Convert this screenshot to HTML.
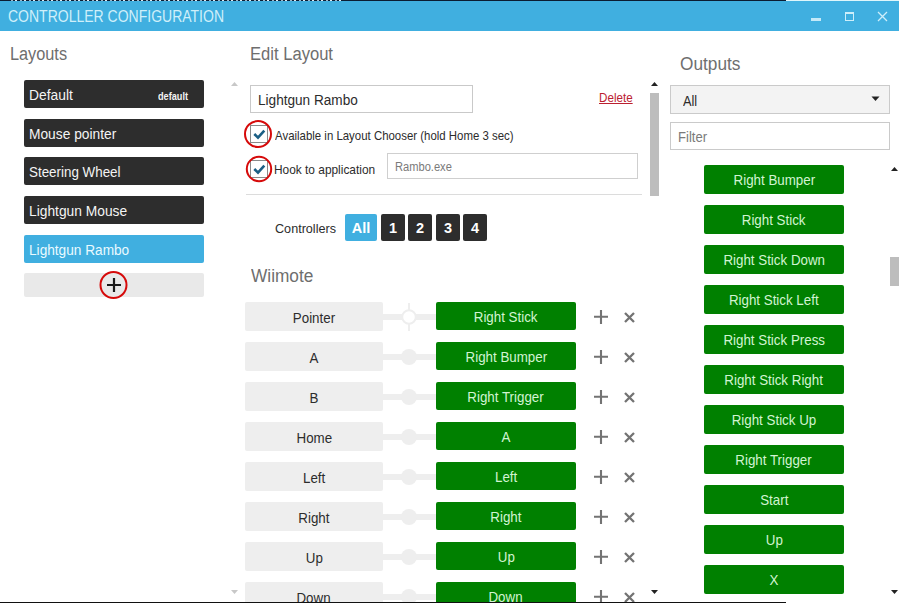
<!DOCTYPE html>
<html><head><meta charset="utf-8">
<style>
*{margin:0;padding:0;box-sizing:border-box}
html,body{width:899px;height:603px;overflow:hidden;background:#fff;font-family:"Liberation Sans",sans-serif;position:relative}
.a{position:absolute}
.t{position:absolute;white-space:nowrap;line-height:1;transform-origin:0 0}
.sc{display:inline-block;transform:scaleX(0.92);white-space:nowrap}
.gb{position:absolute;left:245px;width:138px;height:29px;background:#eeeeee;border-radius:2px;color:#2c2c2c;font-size:14.5px;text-align:center;line-height:32px}
.ln{position:absolute;left:382px;width:54px;height:6px;background:#eeeeee}
.nd{position:absolute;left:401px;width:16px;height:16px;border-radius:50%;background:#eeeeee}
.gr{position:absolute;width:140px;height:28px;background:#008000;border-radius:2px;color:#d2f4d2;font-size:14.5px;text-align:center;line-height:30px;white-space:nowrap}
.btn{position:absolute;top:214px;height:27px;border-radius:2px;background:#2d2d2d;color:#fff;font-size:14.5px;font-weight:bold;text-align:center;line-height:28px}
</style></head><body>
<div class="a" style="left:0;top:0;width:786px;height:1px;background:#0b1d33"></div>
<div class="a" style="left:8px;top:0;width:335px;height:1px;background:repeating-linear-gradient(90deg,#0b1d33 0 3px,#9fb6c8 3px 5px,#0b1d33 5px 7px,#dfe9f0 7px 9px)"></div>
<div class="a" style="left:786px;top:0;width:113px;height:1px;background:#dff6fb"></div>
<div class="a" style="left:0;top:1px;width:899px;height:30px;background:#40afe0"></div>
<div class="a" style="left:811px;top:18px;width:10px;height:3px;background:#c4e9f8"></div>
<div class="a" style="left:845px;top:12px;width:9px;height:9px;border:1px solid #cdeefa;border-top-width:2px"></div>
<svg class="a" style="left:877px;top:11px" width="11" height="11"><path d="M1 1L10 10M10 1L1 10" stroke="#cdeefa" stroke-width="1.3"/></svg>
<div class="a" style="left:24px;top:80px;width:180px;height:28px;border-radius:2px;background:#2d2d2d"></div>
<div class="a" style="left:24px;top:119px;width:180px;height:28px;border-radius:2px;background:#2d2d2d"></div>
<div class="a" style="left:24px;top:157px;width:180px;height:28px;border-radius:2px;background:#2d2d2d"></div>
<div class="a" style="left:24px;top:196px;width:180px;height:28px;border-radius:2px;background:#2d2d2d"></div>
<div class="a" style="left:24px;top:235px;width:180px;height:28px;border-radius:2px;background:#40afe0"></div>
<div class="a" style="left:24px;top:273px;width:180px;height:24px;background:#e9e9e9;border-radius:2px"></div>
<svg class="a" style="left:99px;top:271px" width="30" height="30"><circle cx="14.5" cy="14" r="13" fill="none" stroke="#d60a0a" stroke-width="2"/><path d="M15 7V21M8 14H22" stroke="#1a1a1a" stroke-width="2.2"/></svg>
<div class="a" style="left:250px;top:85px;width:223px;height:28px;border:1px solid #c9c9c9;background:#fff"></div>
<div class="a" style="left:250px;top:125px;width:18px;height:18px;border:1px solid #8a8a8a;background:#fff"></div>
<svg class="a" style="left:250px;top:125px" width="18" height="18"><path d="M4.3 9L8 12.6L14.3 5.6" fill="none" stroke="#1b5f85" stroke-width="2.6"/></svg>
<svg class="a" style="left:243.4px;top:118.9px" width="30" height="30"><circle cx="15" cy="15" r="13" fill="none" stroke="#d60a0a" stroke-width="2"/></svg>
<div class="a" style="left:250px;top:160px;width:18px;height:18px;border:1px solid #8a8a8a;background:#fff"></div>
<svg class="a" style="left:250px;top:160px" width="18" height="18"><path d="M4.3 9L8 12.6L14.3 5.6" fill="none" stroke="#1b5f85" stroke-width="2.6"/></svg>
<svg class="a" style="left:244.0px;top:154.2px" width="30" height="30"><circle cx="15" cy="15" r="12.2" fill="none" stroke="#d60a0a" stroke-width="2"/></svg>
<div class="a" style="left:387px;top:153px;width:251px;height:26px;border:1px solid #cfcfcf;background:#fff"></div>
<div class="a" style="left:246px;top:194px;width:396px;height:1px;background:#dcdcdc"></div>
<div class="a" style="left:650px;top:93px;width:9px;height:103px;background:#bdbdbd"></div>
<svg class="a" style="left:650px;top:81px" width="9" height="6"><path d="M1 5L4.5 1L8 5Z" fill="#222"/></svg>
<svg class="a" style="left:230px;top:81px" width="9" height="6"><path d="M1 5L4.5 1L8 5Z" fill="#c8c8c8"/></svg>
<svg class="a" style="left:230px;top:589px" width="9" height="6"><path d="M1 1L4.5 5L8 1Z" fill="#c8c8c8"/></svg>
<svg class="a" style="left:650px;top:589px" width="9" height="6"><path d="M1 1L4.5 5L8 1Z" fill="#222"/></svg>
<div class="btn" style="left:345px;width:32px;background:#40afe0">All</div>
<div class="btn" style="left:381px;width:24px">1</div>
<div class="btn" style="left:408px;width:24px">2</div>
<div class="btn" style="left:436px;width:24px">3</div>
<div class="btn" style="left:463px;width:24px">4</div>
<div class="gb" style="top:302px"><span class="sc">Pointer</span></div>
<div class="ln" style="top:314px"></div>
<svg class="a" style="left:399px;top:302px" width="20" height="30"><path d="M10 1V29" stroke="#eeeeee" stroke-width="2"/><circle cx="10" cy="15" r="6.8" fill="#fff" stroke="#eeeeee" stroke-width="2"/></svg>
<div class="gr" style="left:436px;top:302px"><span class="sc">Right Stick</span></div>
<svg class="a" style="left:594px;top:310px" width="15" height="15"><path d="M7 0V14M0 6.8H14" stroke="#737373" stroke-width="2.1"/></svg>
<svg class="a" style="left:624px;top:312px" width="11" height="11"><path d="M1 1L10 10M10 1L1 10" stroke="#737373" stroke-width="2.3"/></svg>
<div class="gb" style="top:342px"><span class="sc">A</span></div>
<div class="ln" style="top:354px"></div>
<div class="nd" style="top:349px"></div>
<div class="gr" style="left:436px;top:342px"><span class="sc">Right Bumper</span></div>
<svg class="a" style="left:594px;top:350px" width="15" height="15"><path d="M7 0V14M0 6.8H14" stroke="#737373" stroke-width="2.1"/></svg>
<svg class="a" style="left:624px;top:352px" width="11" height="11"><path d="M1 1L10 10M10 1L1 10" stroke="#737373" stroke-width="2.3"/></svg>
<div class="gb" style="top:382px"><span class="sc">B</span></div>
<div class="ln" style="top:394px"></div>
<div class="nd" style="top:389px"></div>
<div class="gr" style="left:436px;top:382px"><span class="sc">Right Trigger</span></div>
<svg class="a" style="left:594px;top:390px" width="15" height="15"><path d="M7 0V14M0 6.8H14" stroke="#737373" stroke-width="2.1"/></svg>
<svg class="a" style="left:624px;top:392px" width="11" height="11"><path d="M1 1L10 10M10 1L1 10" stroke="#737373" stroke-width="2.3"/></svg>
<div class="gb" style="top:422px"><span class="sc">Home</span></div>
<div class="ln" style="top:434px"></div>
<div class="nd" style="top:429px"></div>
<div class="gr" style="left:436px;top:422px"><span class="sc">A</span></div>
<svg class="a" style="left:594px;top:430px" width="15" height="15"><path d="M7 0V14M0 6.8H14" stroke="#737373" stroke-width="2.1"/></svg>
<svg class="a" style="left:624px;top:432px" width="11" height="11"><path d="M1 1L10 10M10 1L1 10" stroke="#737373" stroke-width="2.3"/></svg>
<div class="gb" style="top:462px"><span class="sc">Left</span></div>
<div class="ln" style="top:474px"></div>
<div class="nd" style="top:469px"></div>
<div class="gr" style="left:436px;top:462px"><span class="sc">Left</span></div>
<svg class="a" style="left:594px;top:470px" width="15" height="15"><path d="M7 0V14M0 6.8H14" stroke="#737373" stroke-width="2.1"/></svg>
<svg class="a" style="left:624px;top:472px" width="11" height="11"><path d="M1 1L10 10M10 1L1 10" stroke="#737373" stroke-width="2.3"/></svg>
<div class="gb" style="top:502px"><span class="sc">Right</span></div>
<div class="ln" style="top:514px"></div>
<div class="nd" style="top:509px"></div>
<div class="gr" style="left:436px;top:502px"><span class="sc">Right</span></div>
<svg class="a" style="left:594px;top:510px" width="15" height="15"><path d="M7 0V14M0 6.8H14" stroke="#737373" stroke-width="2.1"/></svg>
<svg class="a" style="left:624px;top:512px" width="11" height="11"><path d="M1 1L10 10M10 1L1 10" stroke="#737373" stroke-width="2.3"/></svg>
<div class="gb" style="top:542px"><span class="sc">Up</span></div>
<div class="ln" style="top:554px"></div>
<div class="nd" style="top:549px"></div>
<div class="gr" style="left:436px;top:542px"><span class="sc">Up</span></div>
<svg class="a" style="left:594px;top:550px" width="15" height="15"><path d="M7 0V14M0 6.8H14" stroke="#737373" stroke-width="2.1"/></svg>
<svg class="a" style="left:624px;top:552px" width="11" height="11"><path d="M1 1L10 10M10 1L1 10" stroke="#737373" stroke-width="2.3"/></svg>
<div class="gb" style="top:582px"><span class="sc">Down</span></div>
<div class="ln" style="top:594px"></div>
<div class="nd" style="top:589px"></div>
<div class="gr" style="left:436px;top:582px"><span class="sc">Down</span></div>
<svg class="a" style="left:594px;top:590px" width="15" height="15"><path d="M7 0V14M0 6.8H14" stroke="#737373" stroke-width="2.1"/></svg>
<svg class="a" style="left:624px;top:592px" width="11" height="11"><path d="M1 1L10 10M10 1L1 10" stroke="#737373" stroke-width="2.3"/></svg>
<div class="a" style="left:670px;top:85px;width:220px;height:29px;border:1px solid #cacaca;background:#f3f3f3"></div>
<svg class="a" style="left:871px;top:96px" width="9" height="6"><path d="M0.5 0.5L4.5 5L8.5 0.5Z" fill="#222"/></svg>
<div class="a" style="left:670px;top:122px;width:220px;height:28px;border:1px solid #cacaca;background:#fff"></div>
<div class="gr" style="left:704px;top:165px;height:29px;line-height:30px"><span class="sc">Right Bumper</span></div>
<div class="gr" style="left:704px;top:205px;height:29px;line-height:30px"><span class="sc">Right Stick</span></div>
<div class="gr" style="left:704px;top:245px;height:29px;line-height:30px"><span class="sc">Right Stick Down</span></div>
<div class="gr" style="left:704px;top:285px;height:29px;line-height:30px"><span class="sc">Right Stick Left</span></div>
<div class="gr" style="left:704px;top:325px;height:29px;line-height:30px"><span class="sc">Right Stick Press</span></div>
<div class="gr" style="left:704px;top:365px;height:29px;line-height:30px"><span class="sc">Right Stick Right</span></div>
<div class="gr" style="left:704px;top:405px;height:29px;line-height:30px"><span class="sc">Right Stick Up</span></div>
<div class="gr" style="left:704px;top:445px;height:29px;line-height:30px"><span class="sc">Right Trigger</span></div>
<div class="gr" style="left:704px;top:485px;height:29px;line-height:30px"><span class="sc">Start</span></div>
<div class="gr" style="left:704px;top:525px;height:29px;line-height:30px"><span class="sc">Up</span></div>
<div class="gr" style="left:704px;top:565px;height:29px;line-height:30px"><span class="sc">X</span></div>
<svg class="a" style="left:890px;top:166px" width="9" height="6"><path d="M1 5L4.5 1L8 5Z" fill="#222"/></svg>
<svg class="a" style="left:890px;top:589px" width="9" height="6"><path d="M1 1L4.5 5L8 1Z" fill="#222"/></svg>
<div class="a" style="left:890px;top:257px;width:9px;height:29px;background:#bdbdbd"></div>
<div class="a" style="left:0;top:602px;width:786px;height:1px;background:#111"></div>
<div class="t" style="left:8.12px;top:8.86px;font-size:16px;font-weight:400;color:#cfeffa;transform:scaleX(0.8751);">CONTROLLER CONFIGURATION</div>
<div class="t" style="left:9.90px;top:44.76px;font-size:18px;font-weight:400;color:#6e6e6e;transform:scaleX(0.9048);">Layouts</div>
<div class="t" style="left:250.18px;top:44.76px;font-size:18px;font-weight:400;color:#6e6e6e;transform:scaleX(0.9213);">Edit Layout</div>
<div class="t" style="left:679.64px;top:54.76px;font-size:18px;font-weight:400;color:#6e6e6e;transform:scaleX(0.9581);">Outputs</div>
<div class="t" style="left:250.50px;top:266.76px;font-size:18px;font-weight:400;color:#6e6e6e;transform:scaleX(0.9594);">Wiimote</div>
<div class="t" style="left:28.61px;top:88.15px;font-size:14px;font-weight:400;color:#f4f4f4;transform:scaleX(0.9884);">Default</div>
<div class="t" style="left:157.80px;top:90.69px;font-size:11px;font-weight:700;color:#f4f4f4;transform:scaleX(0.8333);">default</div>
<div class="t" style="left:28.62px;top:127.15px;font-size:14px;font-weight:400;color:#f4f4f4;transform:scaleX(0.9830);">Mouse pointer</div>
<div class="t" style="left:28.64px;top:165.15px;font-size:14px;font-weight:400;color:#f4f4f4;transform:scaleX(0.9564);">Steering Wheel</div>
<div class="t" style="left:28.62px;top:204.15px;font-size:14px;font-weight:400;color:#f4f4f4;transform:scaleX(0.9847);">Lightgun Mouse</div>
<div class="t" style="left:28.62px;top:243.15px;font-size:14px;font-weight:400;color:#eafaff;transform:scaleX(0.9752);">Lightgun Rambo</div>
<div class="t" style="left:257.73px;top:93.15px;font-size:14px;font-weight:400;color:#2c2c2c;transform:scaleX(0.9713);">Lightgun Rambo</div>
<div class="t" style="left:598.73px;top:91.84px;font-size:12px;font-weight:400;color:#bb2030;transform:scaleX(0.9697);text-decoration:underline;">Delete</div>
<div class="t" style="left:274.60px;top:129.00px;font-size:13px;font-weight:400;color:#2c2c2c;transform:scaleX(0.8790);">Available in Layout Chooser (hold Home 3 sec)</div>
<div class="t" style="left:274.19px;top:163.00px;font-size:13px;font-weight:400;color:#2c2c2c;transform:scaleX(0.9147);">Hook to application</div>
<div class="t" style="left:395.17px;top:160.84px;font-size:12px;font-weight:400;color:#7a7a7a;transform:scaleX(0.9267);">Rambo.exe</div>
<div class="t" style="left:274.57px;top:221.57px;font-size:13.5px;font-weight:400;color:#2c2c2c;transform:scaleX(0.9344);">Controllers</div>
<div class="t" style="left:682.70px;top:94.15px;font-size:14px;font-weight:400;color:#2c2c2c;transform:scaleX(0.9133);">All</div>
<div class="t" style="left:677.67px;top:130.15px;font-size:14px;font-weight:400;color:#7a7a7a;transform:scaleX(0.9333);">Filter</div>
</body></html>
